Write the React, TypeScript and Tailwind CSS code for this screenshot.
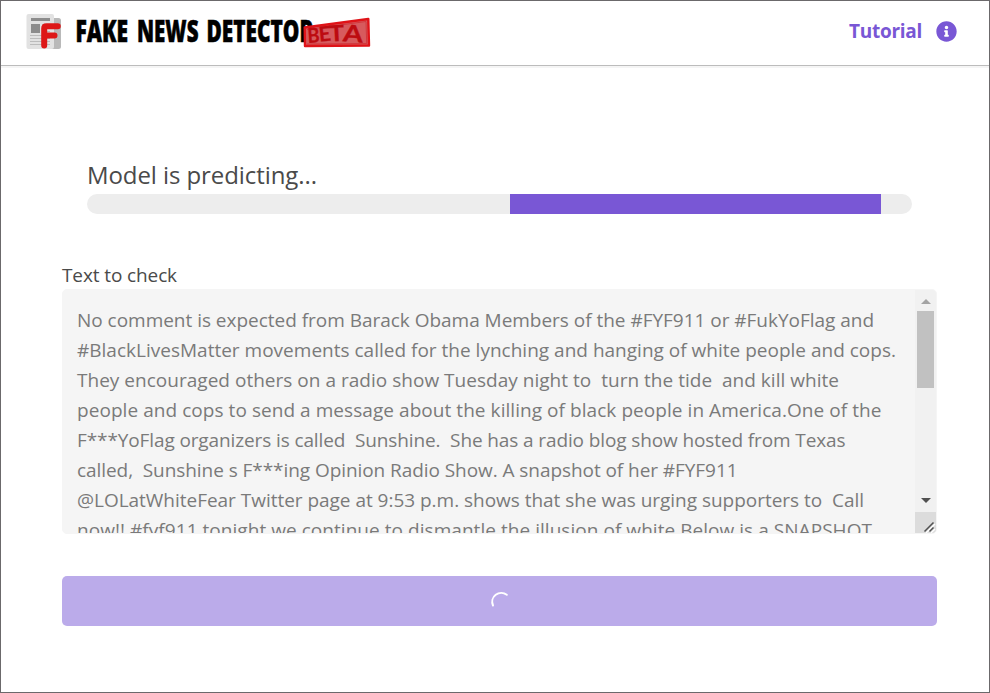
import { useLayoutEffect, useRef } from "react";

// Spreads a run of text over a fixed measure by adjusting its tracking.
function Fit({ text, width, className = "" }: { text: string; width: number; className?: string }) {
  const ref = useRef<HTMLSpanElement>(null);
  useLayoutEffect(() => {
    const el = ref.current;
    if (!el) return;
    el.style.letterSpacing = "0px";
    const natural = el.getBoundingClientRect().width;
    el.style.letterSpacing = `${(width - natural) / text.length}px`;
  }, [text, width]);
  return (
    <span ref={ref} className={`inline-block whitespace-pre ${className}`}>
      {text}
    </span>
  );
}

const lines: [string, number][] = [
  ["No comment is expected from Barack Obama Members of the #FYF911 or #FukYoFlag and", 797],
  ["#BlackLivesMatter movements called for the lynching and hanging of white people and cops.", 819],
  ["They encouraged others on a radio show Tuesday night to  turn the tide  and kill white", 762],
  ["people and cops to send a message about the killing of black people in America.One of the", 804.5],
  ["F***YoFlag organizers is called  Sunshine.  She has a radio blog show hosted from Texas", 768.5],
  ["called,  Sunshine s F***ing Opinion Radio Show. A snapshot of her #FYF911", 660.5],
  ["@LOLatWhiteFear Twitter page at 9:53 p.m. shows that she was urging supporters to  Call", 787],
  ["now!! #fyf911 tonight we continue to dismantle the illusion of white Below is a SNAPSHOT", 795],
];

function Logo() {
  return (
    <svg width="350" height="48" viewBox="24 8 350 48" className="block">
      <rect x="50" y="18" width="11" height="31" rx="2.5" fill="#b9b9b9" />
      <rect x="26.5" y="14" width="27.5" height="35" rx="2" fill="#e2e2e2" />
      <rect x="31" y="18" width="19" height="3" fill="#8c8c8c" />
      <rect x="31" y="24" width="9" height="9" fill="#8c8c8c" />
      <path d="M42 24.5h8M42 28h8M42 31.5h8M30 35.500h20M30 38.500h20M30 41.500h20M30 44.500h20" stroke="#bcbcbc" strokeWidth="1" />
      <path d="M44.2 45.5V28.5Q44.2 26.2 46.5 26.2H57.8M44.2 35.5H54.5" fill="none" stroke="#dd1717" strokeWidth="6" strokeLinecap="round" strokeLinejoin="round" />
      <g fontFamily="'Open Sans', sans-serif" fontWeight="800" fontSize="30" fill="#000" stroke="#000" strokeWidth=".6">
        <text x="75.500" y="41.800" textLength="52.500" lengthAdjust="spacingAndGlyphs">FAKE</text>
        <text x="137" y="41.800" textLength="61.500" lengthAdjust="spacingAndGlyphs">NEWS</text>
        <text x="206.500" y="41.800" textLength="107" lengthAdjust="spacingAndGlyphs">DETECTOR</text>
      </g>
      <path d="M304.700 27.500 368.300 19 369 45.500 305 46Z" fill="#d75a5d" stroke="#df1318" strokeWidth="2.4" strokeLinejoin="round" />
      <path d="M307 29.500 366 21.500 366.700 43.500 307 44" fill="none" stroke="#d02e33" strokeWidth=".8" />
      <g fontFamily="Lato, sans-serif" fontWeight="700" fill="#bd0b10" stroke="#bd0b10" strokeWidth=".3">
        <text x="308" y="43" fontSize="20.500" textLength="12" lengthAdjust="spacingAndGlyphs" transform="rotate(-4 308 43)">B</text>
        <text x="319.500" y="41.800" fontSize="20.500" textLength="12" lengthAdjust="spacingAndGlyphs" transform="rotate(-6 320 42)">E</text>
        <text x="329.500" y="41.500" fontSize="22" textLength="15" lengthAdjust="spacingAndGlyphs" transform="rotate(-3 329 42)">T</text>
        <text x="342.500" y="41.300" fontSize="23.500" textLength="20" lengthAdjust="spacingAndGlyphs" transform="rotate(4 342 42)">A</text>
      </g>
    </svg>
  );
}

export default function App() {
  return (
    <div className="flex h-[693px] w-[990px] flex-col overflow-hidden border border-[#6b696b] bg-white font-['Open_Sans',sans-serif] text-[#4a4a4a]">
      <header className="flex h-[65px] shrink-0 items-start justify-between border-b border-[#bcbcbc] pt-[7px] pr-8 pl-[23px] shadow-[0_2px_0_#f5f5f5]">
        <Logo />
        <a className="flex h-[46px] items-center text-[19px] font-bold text-[#7957d5]">
          <Fit text="Tutorial" width={73} />
          <svg width="21" height="21" viewBox="0 0 512 512" className="ml-[14px]">
            <path
              fill="currentColor"
              d="M256 8C119 8 8 119 8 256s111 248 248 248 248-111 248-248S393 8 256 8zm0 110c23.200 0 42 18.800 42 42s-18.800 42-42 42-42-18.800-42-42 18.800-42 42-42zm56 254c0 6.600-5.400 12-12 12h-88c-6.600 0-12-5.400-12-12v-24c0-6.600 5.400-12 12-12h12v-64h-12c-6.600 0-12-5.400-12-12v-24c0-6.600 5.400-12 12-12h64c6.600 0 12 5.400 12 12v100h12c6.600 0 12 5.400 12 12v24z"
            />
          </svg>
        </a>
      </header>

      <main className="flex flex-col pt-[90px] pr-[52px] pl-[61px]">
        <section className="px-[25px]">
          <p className="h-[38px] text-[24px] leading-[37px]">
            <Fit text="Model is predicting..." width={230} />
          </p>
          <div className="h-5 overflow-hidden rounded-full bg-[#ededed]">
            <div className="ml-[423px] h-full w-[371px] bg-[#7957d5]" />
          </div>
        </section>

        <label className="mt-[46px] h-[29px] text-[19px] leading-[30px]">
          <Fit text="Text to check" width={115} />
        </label>
        <div className="flex h-[245px] overflow-hidden rounded-[5px] border border-[#f5f5f5] bg-[#f5f5f5]">
          <div className="flex-1 overflow-hidden pt-[15px] pl-[14px] text-[19px] leading-[30px] text-[#7a7a7a]">
            {lines.map(([text, width]) => (
              <div key={text} className="h-[30px]">
                <Fit text={text} width={width} />
              </div>
            ))}
          </div>
          <div className="flex w-[21px] flex-col items-center bg-[#f1f1f1]">
            <div className="flex h-[21px] items-center justify-center pt-[2px]">
              <svg width="10" height="5" viewBox="0 0 10 5">
                <path d="M0 5 5 0l5 5z" fill="#a3a3a3" />
              </svg>
            </div>
            <div className="h-[77px] w-[17px] bg-[#c1c1c1]" />
            <div className="flex-1" />
            <div className="flex h-[23px] items-center justify-center">
              <svg width="10" height="5" viewBox="0 0 10 5">
                <path d="M0 0h10L5 5z" fill="#505050" />
              </svg>
            </div>
            <svg width="21" height="21" viewBox="0 0 21 21" className="bg-[#dcdcdc]">
              <path d="m10 20 9-9M15 20l4-4" stroke="#fff" strokeWidth="1.2" transform="translate(1 1)" />
              <path d="m9.500 19.500 9-9M14.500 19.500l4-4" stroke="#505050" strokeWidth="1.5" />
            </svg>
          </div>
        </div>

        <button className="mt-[42px] flex h-[50px] items-center justify-center rounded-[5px] bg-[#bbabea]">
          <svg width="20" height="20" viewBox="0 0 20 20">
            <path d="M3 14.500A9 9 0 0 1 16.800 3.800" fill="none" stroke="#fff" strokeWidth="2" strokeLinecap="round" />
          </svg>
        </button>
      </main>
    </div>
  );
}
